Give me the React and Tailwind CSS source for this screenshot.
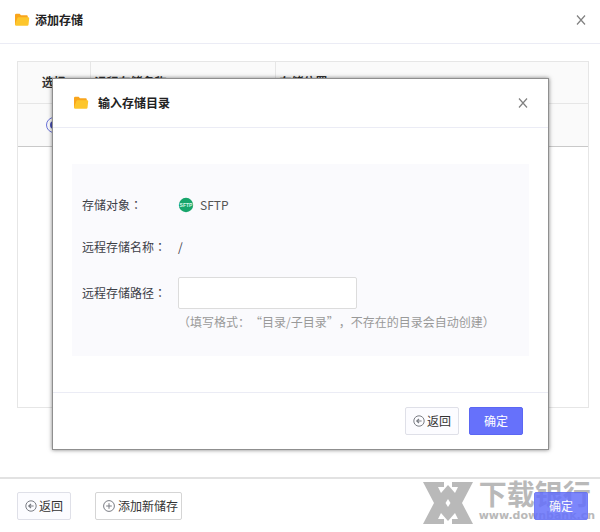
import { useState } from "react";

function FolderIcon() {
  return (
    <svg width="16" height="14" viewBox="0 0 16 14" aria-hidden="true">
      <path d="M1 2a1.2 1.2 0 0 1 1.2-1.2h3.4l1.4 1.4h5.6a1.2 1.2 0 0 1 1.2 1.2V12H1z" fill="#f9a51c" />
      <path d="M4.4 4.2h9.8a1 1 0 0 1 1 1.1l-.7 6.4a1.2 1.2 0 0 1-1.2 1.1H2.2A1.2 1.2 0 0 1 1 11.6L3.4 5a1.1 1.1 0 0 1 1-.8z" fill="#fdc62c" />
    </svg>
  );
}

function CloseIcon() {
  return (
    <svg width="10" height="10" viewBox="0 0 10 10" fill="none" stroke="#808080" strokeWidth="1.2" aria-hidden="true">
      <path d="M1 .5l8 9M9 .5l-8 9" />
    </svg>
  );
}

function BackIcon() {
  return (
    <svg width="12" height="12" viewBox="0 0 12 12" fill="none" stroke="#7a7d84" strokeWidth="1" aria-hidden="true">
      <circle cx="6" cy="6" r="5.2" />
      <path d="M8.6 6H4M6 4L3.8 6 6 8" strokeWidth="1.2" />
    </svg>
  );
}

function PlusIcon() {
  return (
    <svg width="12" height="12" viewBox="0 0 12 12" fill="none" stroke="#7a7d84" strokeWidth="1" aria-hidden="true">
      <circle cx="6" cy="6" r="5.4" />
      <path d="M6 3.2v5.6M3.2 6h5.6" />
    </svg>
  );
}

function SftpIcon() {
  return (
    <svg width="16" height="16" viewBox="0 0 16 16" aria-hidden="true">
      <circle cx="8" cy="8" r="7.2" fill="#17a56b" />
      <text x="8" y="10" textAnchor="middle" fontSize="5" fontWeight="bold" fill="#d9f5e8" fontFamily="Liberation Sans, sans-serif">SFTP</text>
    </svg>
  );
}

function DialogHeader({ title, className = "" }) {
  return (
    <header className={`flex items-center border-b border-[#ebecf5] ${className}`}>
      <FolderIcon />
      {title}
      <button type="button" aria-label="关闭" className="ml-auto">
        <CloseIcon />
      </button>
    </header>
  );
}

const buttonLooks = {
  primary: "px-[14px] border-[#5b67f3] bg-[#6671fb] text-white",
  back: "gap-[2px] px-[7px] border-[#dfe0e8] bg-[#fcfcff] text-[#333]",
  add: "gap-[3px] pl-[7px] pr-[3px] border-[#d5d5d5] bg-white text-[#333]",
};

function Button({ children, look }) {
  return (
    <button type="button" className={`flex h-7 items-center rounded-xs border whitespace-nowrap ${buttonLooks[look]}`}>
      {children}
    </button>
  );
}

function Colon() {
  return <span className="font-['Noto_Sans_CJK_JP',sans-serif]">：</span>;
}

function Watermark() {
  return (
    <div className="pointer-events-none absolute right-[5px] bottom-1.5 flex items-center gap-1.5 text-[#b9b9b9]">
      <svg width="50" height="42" viewBox="0 0 50 42" fill="currentColor" aria-hidden="true">
        <path
          fillRule="evenodd"
          d="M0 0H21V5H15L18 11L25 3L32 11L35 5H29V0H50L39 21L50 42H29V37H35L32 31L25 39L18 31L15 37H21V42H0L11 21ZM25 17L22.5 21L25 25L27.5 21Z"
        />
      </svg>
      <div className="flex flex-col">
        <span className="text-[28px] leading-[26px] font-bold">下载银行</span>
        <span className="font-['DejaVu_Sans',sans-serif] text-[11px] leading-5 font-bold">www.downbank.cn</span>
      </div>
    </div>
  );
}

function StorageTable() {
  return (
    <div className="min-h-[347px] border border-[#e6e6e6]">
      <table className="w-full table-fixed border-collapse text-left">
        <thead>
          <tr className="h-[41px] border-b border-[#e6e6e6] bg-[#fafafa]">
            <th className="w-[72px] border-r border-[#e6e6e6] text-center">选择</th>
            <th className="w-[185px] border-r border-[#e6e6e6] pl-1">远程存储名称</th>
            <th className="pl-1">存储位置</th>
          </tr>
        </thead>
        <tbody>
          <tr className="h-[43px] border-b border-[#c9c9c9] bg-[#fafafa]">
            <td className="text-center">
              <input
                type="radio"
                name="storage"
                aria-label="SFTP"
                defaultChecked
                className="size-4 appearance-none rounded-full border border-[#6a73d9] bg-[#4a50b5] bg-clip-content p-[3px] align-middle"
              />
            </td>
            <td className="pl-1">/</td>
            <td className="pl-1">SFTP</td>
          </tr>
        </tbody>
      </table>
    </div>
  );
}

function DirectoryDialog() {
  const [path, setPath] = useState("");

  return (
    <div className="pointer-events-none absolute inset-0 z-20 flex items-start pt-[79px] pr-[52px] pl-[53px]">
      <section role="dialog" aria-label="输入存储目录" className="pointer-events-auto flex-1 bg-white shadow-[0_0_0_1px_#8f8f8f,0_0_4px_1px_rgba(0,0,0,0.5)]">
        <DialogHeader
          title={<h2 className="ml-[9px] font-bold text-[#222]">输入存储目录</h2>}
          className="h-[49px] pr-5 pl-5"
        />
        <div className="px-[19px] py-9">
          <div className="grid grid-cols-[96px_1fr] items-center bg-[#fafafd] px-[10px] pt-[31px] pb-6 text-[#3d4048]">
            <span>存储对象<Colon /></span>
            <span className="flex h-5 items-center gap-1.5 text-[#555]">
              <SftpIcon />
              SFTP
            </span>
            <span className="mt-[22px] leading-5">远程存储名称<Colon /></span>
            <span className="mt-[22px] leading-5">/</span>
            <label htmlFor="path" className="mt-5">远程存储路径<Colon /></label>
            <input
              id="path"
              value={path}
              onChange={(e) => setPath(e.target.value)}
              className="mt-5 h-8 w-[179px] rounded-xs border border-[#dcdcdc] bg-white px-2"
            />
            <p lang="zh-CN" className="col-start-2 mt-[3px] leading-5 whitespace-nowrap text-[#999] [text-spacing-trim:space-all]">
              （填写格式<Colon />“目录/子目录”，不存在的目录会自动创建）
            </p>
          </div>
        </div>
        <footer className="flex justify-end gap-[10px] border-t border-[#ebecf5] py-[14px] pr-[25px]">
          <Button look="back"><BackIcon />返回</Button>
          <Button look="primary">确定</Button>
        </footer>
      </section>
    </div>
  );
}

export default function App() {
  return (
    <main className="relative min-h-screen bg-white font-['Noto_Sans_CJK_SC',sans-serif] text-xs text-[#333]">
      <DialogHeader
        title={<h1 className="ml-[5px] font-bold text-[#222]">添加存储</h1>}
        className="h-11 pr-[14px] pb-1 pl-[14px]"
      />
      <div className="pt-[17px] pr-[11px] pb-[69px] pl-[17px]">
        <StorageTable />
      </div>
      <Watermark />
      <footer className="relative z-10 flex border-t-2 border-[#e2e2e2] pt-[13px] pr-3 pb-3 pl-[17px]">
        <Button look="back"><BackIcon />返回</Button>
        <div className="ml-6">
          <Button look="add"><PlusIcon />添加新储存</Button>
        </div>
        <div className="ml-auto opacity-85">
          <Button look="primary">确定</Button>
        </div>
      </footer>
      <DirectoryDialog />
    </main>
  );
}
